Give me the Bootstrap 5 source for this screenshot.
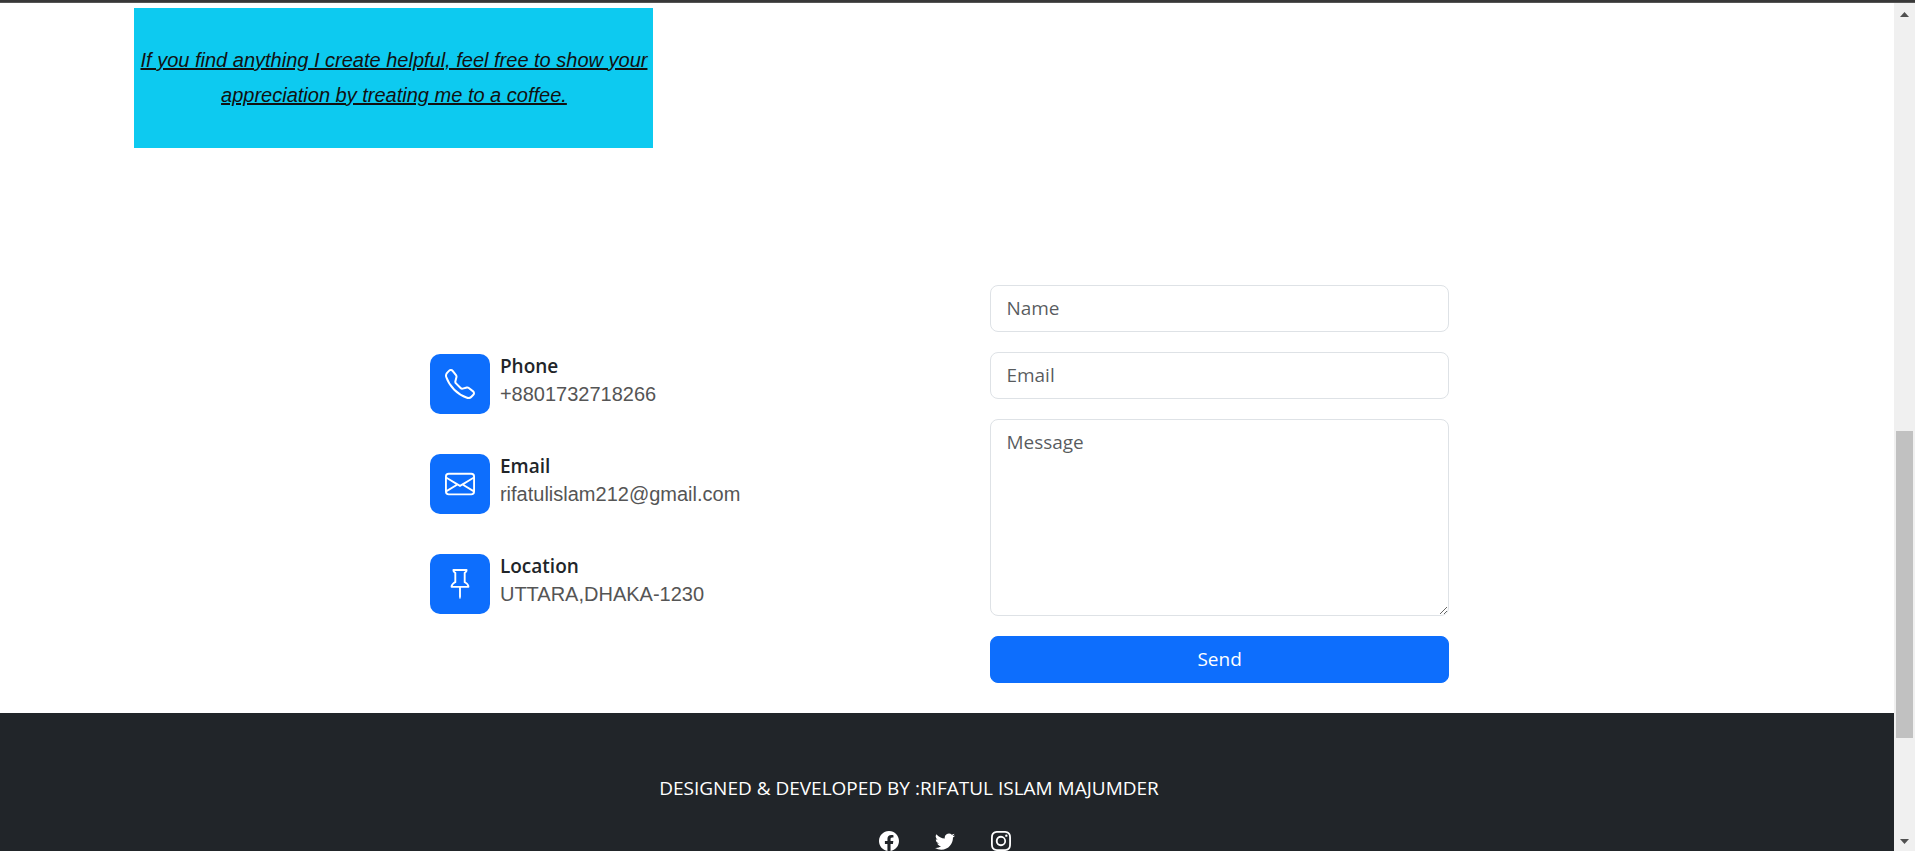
<!DOCTYPE html>
<html lang="en">
<head>
<meta charset="utf-8">
<meta name="viewport" content="width=device-width, initial-scale=1">
<title>Contact</title>
<link href="https://cdn.jsdelivr.net/npm/bootstrap@5.3.0/dist/css/bootstrap.min.css" rel="stylesheet">
<style>
  :root { font-size: 20px; }
  body { font-family: "Open Sans", "Noto Sans", sans-serif; font-size: 19px; line-height: 30px; }
  .top-edge { height: 3px; background: #383838; border-bottom: 1px solid #555; }
  .page-scroll { min-width: 0; }
  .coffee-row { padding: 5px 7.1%; }
  .coffee-note { max-width: 519px; height: 140px; font: italic 20px/35px "Liberation Sans", Arial, sans-serif; }
  .coffee-note a { color: #111; }
  .contact { padding: 132px 23.5% 30px 22.7%; }
  .contact-grid { display: grid; grid-template-columns: 55fr 45fr; }
  .contact-list { gap: 40px; }
  .icon-tile { width: 60px; height: 60px; border-radius: 10px; }
  .contact-name { font-size: 19px; line-height: 25px; font-weight: 600; }
  .contact-value { font: 20px/30px "Liberation Sans", Arial, sans-serif; color: #555; }
  .contact-form { gap: 20px; }
  .contact-form .form-control, .contact-form .btn { font-size: 19px; line-height: 29px; padding: 8px 15px; border-radius: 8px; border-width: 1px; }
  .contact-form .form-control { border-color: #dee2e6; }
  .contact-form textarea.form-control { height: 197px; }
  .site-footer { padding-top: 60px; background: #212529; }
  .credit { padding-right: 76px; }
  .social { gap: 36px; margin-top: 28px; }
  .scroll-track { width: 21px; padding: 9px 2px 7px; background: #f0f0f0; }
  .thumb { height: 37%; background: #c1c1c1; margin: 48.6vh 0 auto; }
</style>
</head>
<body class="vh-100 d-flex flex-column overflow-hidden bg-white">
<div class="top-edge flex-shrink-0"></div>
<div class="d-flex flex-grow-1 overflow-hidden">
  <div class="page-scroll flex-grow-1 overflow-hidden">
    <section class="coffee-row">
      <div class="coffee-note bg-info d-flex align-items-center justify-content-center text-center">
        <a href="#coffee">If you find anything I create helpful, feel free to show your<br>appreciation by treating me to a coffee.</a>
      </div>
    </section>
    <main class="contact">
      <div class="contact-grid align-items-center">
        <div class="contact-list d-flex flex-column">
          <div class="d-flex">
            <span class="icon-tile bg-primary text-white d-flex align-items-center justify-content-center">
              <svg width="30" height="30" viewBox="0 0 16 16" fill="currentColor" aria-hidden="true"><path d="M3.654 1.328a.678.678 0 0 0-1.015-.063L1.605 2.3c-.483.484-.661 1.169-.45 1.77a17.568 17.568 0 0 0 4.168 6.608 17.569 17.569 0 0 0 6.608 4.168c.601.211 1.286.033 1.77-.45l1.034-1.034a.678.678 0 0 0-.063-1.015l-2.307-1.794a.678.678 0 0 0-.58-.122l-2.19.547a1.745 1.745 0 0 1-1.657-.459L5.482 8.062a1.745 1.745 0 0 1-.46-1.657l.548-2.19a.678.678 0 0 0-.122-.58L3.654 1.328zM1.884.511a1.745 1.745 0 0 1 2.612.163L6.29 2.98c.329.423.445.974.315 1.494l-.547 2.19a.678.678 0 0 0 .178.643l2.457 2.457a.678.678 0 0 0 .644.178l2.189-.547a1.745 1.745 0 0 1 1.494.315l2.306 1.794c.829.645.905 1.87.163 2.611l-1.034 1.034c-.74.74-1.846 1.065-2.877.702a18.634 18.634 0 0 1-7.01-4.42 18.634 18.634 0 0 1-4.42-7.009c-.362-1.03-.037-2.137.703-2.877L1.885.511z"/></svg>
            </span>
            <div class="ps-2"><div class="contact-name">Phone</div><div class="contact-value">+8801732718266</div></div>
          </div>
          <div class="d-flex">
            <span class="icon-tile bg-primary text-white d-flex align-items-center justify-content-center">
              <svg width="30" height="30" viewBox="0 0 16 16" fill="currentColor" aria-hidden="true"><path d="M0 4a2 2 0 0 1 2-2h12a2 2 0 0 1 2 2v8a2 2 0 0 1-2 2H2a2 2 0 0 1-2-2V4Zm2-1a1 1 0 0 0-1 1v.217l7 4.2 7-4.2V4a1 1 0 0 0-1-1H2Zm13 2.383-4.708 2.825L15 11.105V5.383Zm-.034 6.876-5.64-3.471L8 9.583l-1.326-.795-5.64 3.47A1 1 0 0 0 2 13h12a1 1 0 0 0 .966-.741ZM1 11.105l4.708-2.897L1 5.383v5.722Z"/></svg>
            </span>
            <div class="ps-2"><div class="contact-name">Email</div><div class="contact-value">rifatulislam212@gmail.com</div></div>
          </div>
          <div class="d-flex">
            <span class="icon-tile bg-primary text-white d-flex align-items-center justify-content-center">
              <svg width="30" height="30" viewBox="0 0 16 16" fill="currentColor" aria-hidden="true"><path d="M4.146.146A.5.5 0 0 1 4.5 0h7a.5.5 0 0 1 .5.5c0 .68-.342 1.174-.646 1.479-.126.125-.25.224-.354.298v4.431l.078.048c.203.127.476.314.751.555C12.36 7.775 13 8.527 13 9.5a.5.5 0 0 1-.5.5h-4v4.5c0 .276-.224 1.5-.5 1.5s-.5-1.224-.5-1.5V10h-4a.5.5 0 0 1-.5-.5c0-.973.64-1.725 1.17-2.189A5.921 5.921 0 0 1 5 6.708V2.277a2.77 2.77 0 0 1-.354-.298C4.342 1.674 4 1.179 4 .5a.5.5 0 0 1 .146-.354zm1.578 1.407.002.001A.5.5 0 0 1 6 2v5a.5.5 0 0 1-.276.447l-.068.037a4.922 4.922 0 0 0-.827.58c-.318.278-.585.596-.725.936h7.792c-.14-.34-.407-.658-.725-.936a4.915 4.915 0 0 0-.881-.61l-.014-.006A.5.5 0 0 1 10 7V2a.5.5 0 0 1 .295-.458 1.775 1.775 0 0 0 .351-.271c.08-.08.155-.17.214-.271H5.14c.06.1.133.191.214.271a1.78 1.78 0 0 0 .37.282z"/></svg>
            </span>
            <div class="ps-2"><div class="contact-name">Location</div><div class="contact-value">UTTARA,DHAKA-1230</div></div>
          </div>
        </div>
        <form class="contact-form d-flex flex-column">
          <input type="text" class="form-control" placeholder="Name" aria-label="Name">
          <input type="email" class="form-control" placeholder="Email" aria-label="Email">
          <textarea class="form-control" placeholder="Message" aria-label="Message"></textarea>
          <button type="button" class="btn btn-primary">Send</button>
        </form>
      </div>
    </main>
    <footer class="site-footer text-white text-center">
      <p class="credit mb-0">DESIGNED &amp; DEVELOPED BY :RIFATUL ISLAM MAJUMDER</p>
      <div class="social d-flex justify-content-center pb-5 pe-1">
        <a href="#facebook" class="text-white d-flex" aria-label="Facebook"><svg width="20" height="20" viewBox="0 0 16 16" fill="currentColor"><path d="M16 8.049c0-4.446-3.582-8.05-8-8.05C3.58 0-.002 3.603-.002 8.05c0 4.017 2.926 7.347 6.75 7.951v-5.625h-2.03V8.05H6.75V6.275c0-2.017 1.195-3.131 3.022-3.131.876 0 1.791.157 1.791.157v1.98h-1.009c-.993 0-1.303.621-1.303 1.258v1.51h2.218l-.354 2.326H9.25V16c3.824-.604 6.75-3.934 6.75-7.951z"/></svg></a>
        <a href="#twitter" class="text-white d-flex" aria-label="Twitter"><svg width="20" height="20" viewBox="0 0 16 16" fill="currentColor"><path d="M5.026 15c6.038 0 9.341-5.003 9.341-9.334 0-.14 0-.282-.006-.422A6.685 6.685 0 0 0 16 3.542a6.658 6.658 0 0 1-1.889.518 3.301 3.301 0 0 0 1.447-1.817 6.533 6.533 0 0 1-2.087.793A3.286 3.286 0 0 0 7.875 6.03a9.325 9.325 0 0 1-6.767-3.429 3.289 3.289 0 0 0 1.018 4.382A3.323 3.323 0 0 1 .64 6.575v.045a3.288 3.288 0 0 0 2.632 3.218 3.203 3.203 0 0 1-.865.115 3.23 3.23 0 0 1-.614-.057 3.283 3.283 0 0 0 3.067 2.277A6.588 6.588 0 0 1 .78 13.58a6.32 6.32 0 0 1-.78-.045A9.344 9.344 0 0 0 5.026 15z"/></svg></a>
        <a href="#instagram" class="text-white d-flex" aria-label="Instagram"><svg width="20" height="20" viewBox="0 0 16 16" fill="currentColor"><path d="M8 0C5.829 0 5.556.01 4.703.048 3.85.088 3.269.222 2.76.42a3.917 3.917 0 0 0-1.417.923A3.927 3.927 0 0 0 .42 2.76C.222 3.268.087 3.85.048 4.7.01 5.555 0 5.827 0 8.001c0 2.172.01 2.444.048 3.297.04.852.174 1.433.372 1.942.205.526.478.972.923 1.417.444.445.89.719 1.416.923.51.198 1.09.333 1.942.372C5.555 15.99 5.827 16 8 16s2.444-.01 3.298-.048c.851-.04 1.434-.174 1.943-.372a3.916 3.916 0 0 0 1.416-.923c.445-.445.718-.891.923-1.417.197-.509.332-1.09.372-1.942C15.99 10.445 16 10.173 16 8s-.01-2.445-.048-3.299c-.04-.851-.175-1.433-.372-1.941a3.926 3.926 0 0 0-.923-1.417A3.911 3.911 0 0 0 13.24.42c-.51-.198-1.092-.333-1.943-.372C10.443.01 10.172 0 7.998 0h.003zm-.717 1.442h.718c2.136 0 2.389.007 3.232.046.78.035 1.204.166 1.486.275.373.145.64.319.92.599.28.28.453.546.598.92.11.281.24.705.275 1.485.039.843.047 1.096.047 3.231s-.008 2.389-.047 3.232c-.035.78-.166 1.203-.275 1.485a2.47 2.47 0 0 1-.599.919c-.28.28-.546.453-.92.598-.28.11-.704.24-1.485.276-.843.038-1.096.047-3.232.047s-2.39-.009-3.233-.047c-.78-.036-1.203-.166-1.485-.276a2.478 2.478 0 0 1-.92-.598 2.48 2.48 0 0 1-.6-.92c-.109-.281-.24-.705-.275-1.485-.038-.843-.046-1.096-.046-3.233 0-2.136.008-2.388.046-3.231.036-.78.166-1.204.276-1.486.145-.373.319-.64.599-.92.28-.28.546-.453.92-.598.282-.11.705-.24 1.485-.276.738-.034 1.024-.044 2.515-.045v.002zm4.988 1.328a.96.96 0 1 0 0 1.92.96.96 0 0 0 0-1.92zm-4.27 1.122a4.109 4.109 0 1 0 0 8.217 4.109 4.109 0 0 0 0-8.217zm0 1.441a2.667 2.667 0 1 1 0 5.334 2.667 2.667 0 0 1 0-5.334z"/></svg></a>
      </div>
    </footer>
  </div>
  <div class="scroll-track d-flex flex-column align-items-center flex-shrink-0" aria-hidden="true">
    <svg width="9" height="5" viewBox="0 0 18 10" fill="#505050"><path d="M0 10 9 0l9 10z"/></svg>
    <div class="thumb w-100"></div>
    <svg width="9" height="5" viewBox="0 0 18 10" fill="#505050"><path d="M0 0h18L9 10z"/></svg>
  </div>
</div>
<script src="https://cdn.jsdelivr.net/npm/bootstrap@5.3.0/dist/js/bootstrap.bundle.min.js"></script>
</body>
</html>
